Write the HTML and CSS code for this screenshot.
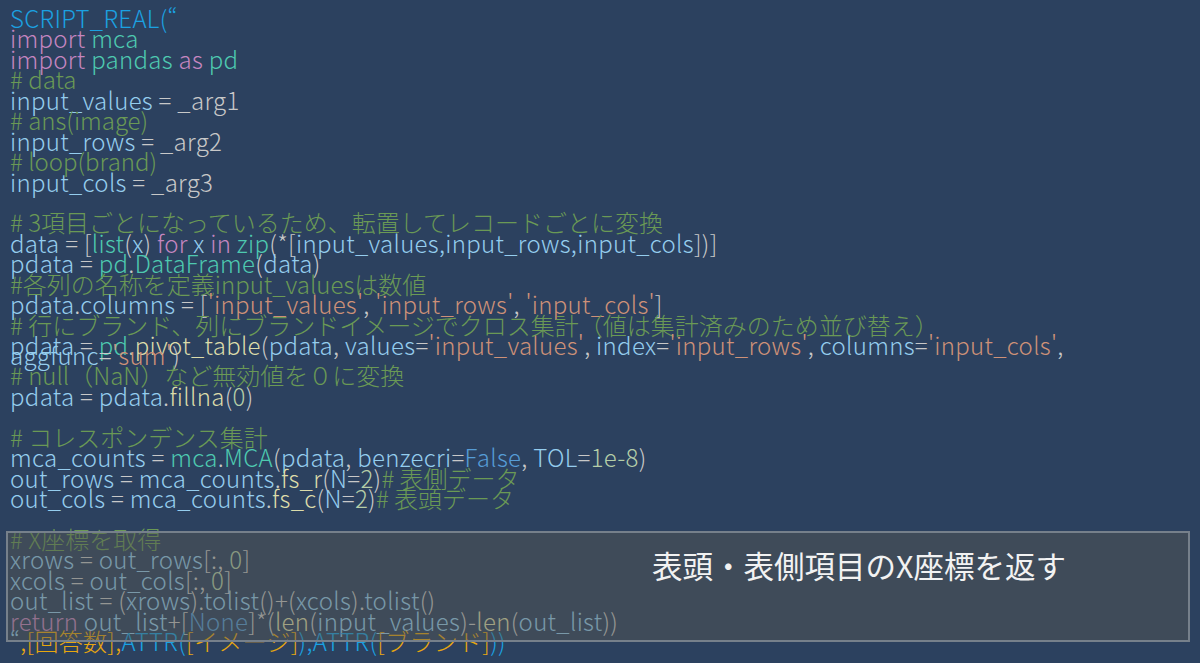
FILE: index.html
```html
<!DOCTYPE html>
<html lang="ja">
<head>
<meta charset="utf-8">
<link rel="stylesheet" href="styles.css">
</head>
<body>
<div class="code">
<div class="ln"><span class="sr">SCRIPT_REAL(“</span></div>
<div class="ln"><span class="kw">import</span> <span class="md">mca</span></div>
<div class="ln"><span class="kw">import</span> <span class="md">pandas</span> <span class="kw">as</span> <span class="md">pd</span></div>
<div class="ln"><span class="cm"># data</span></div>
<div class="ln">input_values <span class="op">= _arg1</span></div>
<div class="ln"><span class="cm"># ans(image)</span></div>
<div class="ln">input_rows <span class="op">= _arg2</span></div>
<div class="ln"><span class="cm"># loop(brand)</span></div>
<div class="ln">input_cols <span class="op">= _arg3</span></div>
<div class="ln"></div>
<div class="ln"><span class="cm"># 3項目ごとになっているため、転置してレコードごとに変換</span></div>
<div class="ln">data <span class="op">= [</span><span class="md">list</span><span class="op">(</span>x<span class="op">)</span> <span class="kw">for</span> x <span class="kw">in</span> <span class="md">zip</span><span class="op">(*[</span>input_values,input_rows,input_cols<span class="op">])]</span></div>
<div class="ln">pdata <span class="op">=</span> <span class="md">pd</span><span class="op">.</span><span class="md">DataFrame</span><span class="op">(</span>data<span class="op">)</span></div>
<div class="ln"><span class="cm">#各列の名称を定義input_valuesは数値</span></div>
<div class="ln">pdata<span class="op">.</span>columns <span class="op">= [</span><span class="st">'input_values'</span><span class="op">,</span> <span class="st">'input_rows'</span><span class="op">,</span> <span class="st">'input_cols'</span><span class="op">]</span></div>
<div class="ln"><span class="cm"># 行にブランド、列にブランドイメージでクロス集計（値は集計済みのため並び替え）</span></div>
<div class="ln half">pdata <span class="op">=</span> <span class="md">pd</span><span class="op">.</span><span class="fn">pivot_table</span><span class="op">(</span>pdata<span class="op">,</span> values<span class="op">=</span><span class="st">'input_values'</span><span class="op">,</span> index<span class="op">=</span><span class="st">'input_rows'</span><span class="op">,</span> columns<span class="op">=</span><span class="st">'input_cols'</span><span class="op">,</span></div>
<div class="ln">aggfunc<span class="op">=</span><span class="st">'sum'</span><span class="op">)</span></div>
<div class="ln"><span class="cm"># null（NaN）など無効値を０に変換</span></div>
<div class="ln">pdata <span class="op">=</span> pdata<span class="op">.</span><span class="fn">fillna</span><span class="op">(</span><span class="nm">0</span><span class="op">)</span></div>
<div class="ln"></div>
<div class="ln"><span class="cm"># コレスポンデンス集計</span></div>
<div class="ln">mca_counts <span class="op">=</span> <span class="md">mca</span><span class="op">.</span><span class="md">MCA</span><span class="op">(</span>pdata<span class="op">,</span> benzecri<span class="op">=</span><span class="bl">False</span><span class="op">,</span> TOL<span class="op">=</span><span class="nm">1e-8</span><span class="op">)</span></div>
<div class="ln">out_rows <span class="op">=</span> mca_counts<span class="op">.</span><span class="fn">fs_r</span><span class="op">(</span>N<span class="op">=</span><span class="nm">2</span><span class="op">)</span><span class="cm"># 表側データ</span></div>
<div class="ln">out_cols <span class="op">=</span> mca_counts<span class="op">.</span><span class="fn">fs_c</span><span class="op">(</span>N<span class="op">=</span><span class="nm">2</span><span class="op">)</span><span class="cm"># 表頭データ</span></div>
<div class="ln"></div>
<div class="ln"><span class="cm"># X座標を取得</span></div>
<div class="ln">xrows <span class="op">=</span> out_rows<span class="op">[:,</span> <span class="nm">0</span><span class="op">]</span></div>
<div class="ln">xcols <span class="op">=</span> out_cols<span class="op">[:,</span> <span class="nm">0</span><span class="op">]</span></div>
<div class="ln">out_list <span class="op">= (</span>xrows<span class="op">).</span>tolist<span class="op">()+(</span>xcols<span class="op">).</span>tolist<span class="op">()</span></div>
<div class="ln"><span class="kw">return</span> out_list<span class="op">+[</span><span class="bl">None</span><span class="op">]*(</span><span class="fn">len</span><span class="op">(</span>input_values<span class="op">)-</span><span class="fn">len</span><span class="op">(</span>out_list<span class="op">))</span></div>
<div class="ln"><span class="q">“</span><span class="or">,[回答数],</span><span class="sr">ATTR(</span><span class="or">[イメージ]</span><span class="sr">),ATTR(</span><span class="or">[ブランド]</span><span class="sr">))</span></div>
<div class="note"><span class="note-text">表頭・表側項目のX座標を返す</span></div>
</div>
</body>
</html>
```
FILE: styles.css
```css
html, body {
  margin: 0;
  padding: 0;
  background: #2c415f;
  width: 1200px;
  height: 663px;
  overflow: hidden;
}
.code {
  position: relative;
  padding: 8px 0 0 10px;
  font-family: "Noto Sans CJK JP", "Noto Sans", sans-serif;
  font-weight: 300;
  font-size: 24px;
  line-height: 20.45px;
  color: #95cdee;
}
.ln {
  height: 20.45px;
  white-space: pre;
  letter-spacing: 0.3px;
}
.ln.half {
  height: 10px;
}
.sr { color: #1ba1e2; }
.kw { color: #c586c0; }
.md { color: #4ec9b0; }
.cm { color: #6a9955; letter-spacing: 0; }
.op { color: #c8c8c8; }
.st { color: #ce9178; }
.fn { color: #dcdcaa; }
.nm { color: #b5cea8; }
.bl { color: #569cd6; }
.q { color: #95cdee; }
.or { color: #e8a70f; }
.note {
  position: absolute;
  left: 6px;
  top: 531px;
  width: 1180px;
  height: 107px;
  border: 2px solid #76808b;
  background: rgba(86, 88, 82, 0.45);
  display: flex;
  align-items: flex-start;
  justify-content: flex-start;
}
.note-text {
  margin: 14px 0 0 644px;
  font-size: 30.5px;
  font-weight: 400;
  line-height: 36px;
  letter-spacing: 0;
  color: #f2f2f2;
}
```
